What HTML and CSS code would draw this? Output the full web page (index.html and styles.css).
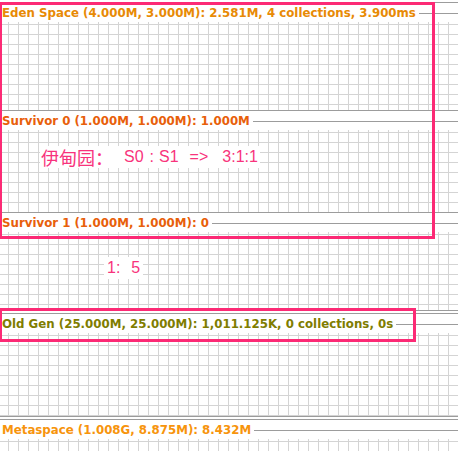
FILE: index.html
```html
<!DOCTYPE html>
<html>
<head>
<meta charset="utf-8">
<link rel="stylesheet" href="styles.css">
</head>
<body>
<div class="panel">
  <section class="space">
    <div class="label-row"><span class="label eden">Eden Space (4.000M, 3.000M): 2.581M, 4 collections, 3.900ms</span><span class="rule"></span></div>
    <div class="grid g-eden"></div>
  </section>
  <section class="space">
    <div class="label-row"><span class="label surv">Survivor 0 (1.000M, 1.000M): 1.000M</span><span class="rule"></span></div>
    <div class="grid g-s0"></div>
  </section>
  <section class="space closed">
    <div class="label-row"><span class="label surv">Survivor 1 (1.000M, 1.000M): 0</span><span class="rule"></span></div>
    <div class="grid g-s1"></div>
  </section>
  <section class="space closed gap">
    <div class="label-row"><span class="label old">Old Gen (25.000M, 25.000M): 1,011.125K, 0 collections, 0s</span><span class="rule"></span></div>
    <div class="grid g-old"></div>
  </section>
  <section class="space gap">
    <div class="label-row"><span class="label meta">Metaspace (1.008G, 8.875M): 8.432M</span><span class="rule"></span></div>
    <div class="grid g-meta"></div>
  </section>
</div>

<div class="box box-young"></div>
<div class="box box-old"></div>

<div class="note note-ratio"><span class="seg s-a">伊甸园：</span><span class="seg s-b">S0</span><span class="seg s-c">:</span><span class="seg s-d">S1</span><span class="seg s-e">=&gt;</span><span class="seg s-f">3:1:1</span></div>
<div class="note note-old"><span class="seg">1:</span><span class="seg s-five">5</span></div>
</body>
</html>
```

FILE: styles.css
```css
html, body {
  margin: 0;
  padding: 0;
  background: #fff;
}
body {
  width: 458px;
  height: 453px;
  overflow: hidden;
  position: relative;
  padding-top: 2px;
  box-sizing: border-box;
}
.panel {
  display: flex;
  flex-direction: column;
  width: 458px;
}
.space {
  border-top: 1px solid #9c9c9c;
}
.space.closed {
  border-bottom: 1px solid #9c9c9c;
}
.space.gap {
  margin-top: 2px;
}
.label-row {
  height: 19px;
  box-sizing: border-box;
  padding-top: 2px;
  display: flex;
  align-items: center;
  background: #fff;
}
.label {
  font-family: "DejaVu Sans", sans-serif;
  font-weight: bold;
  font-size: 11.8px;
  line-height: 17px;
  padding-left: 2px;
  white-space: nowrap;
}
.eden { color: #e88a05; }
.surv { color: #e8600a; }
.old { color: #7f7d00; }
.meta { color: #f7940c; }
.rule {
  flex: 1;
  height: 1px;
  background: #9c9c9c;
  margin-left: 3px;
}
.grid {
  background-color: #fff;
  background-image:
    linear-gradient(to right, #d4d4d4 1px, transparent 1px),
    linear-gradient(to bottom, #d4d4d4 1px, transparent 1px);
  background-size: 10px 10px;
  background-position: 8px 2px;
}
.g-eden { height: 88px; }
.g-s0 { height: 82px; }
.g-s1 { height: 78px; }
.g-old { height: 83px; }
.g-meta { height: 12px; }

.box {
  position: absolute;
  border: 3px solid #fc2a75;
  box-sizing: border-box;
}
.box-young {
  left: -1px;
  top: 2px;
  width: 436px;
  height: 237px;
}
.box-old {
  left: -1px;
  top: 308px;
  width: 417px;
  height: 34px;
}

.note {
  position: absolute;
  display: flex;
  align-items: center;
  background: #fff;
  color: #f8337c;
  font-family: "Liberation Sans", "Noto Sans CJK SC", sans-serif;
  font-size: 16px;
  line-height: 22px;
  white-space: pre;
}
.note-ratio {
  left: 40px;
  top: 146px;
  padding-right: 2px;
}
.s-a { font-family: "Noto Sans CJK SC", sans-serif; font-size: 18px; margin-left: 1px; }
.s-b { margin-left: 11px; }
.s-c { margin-left: 6px; }
.s-d { margin-left: 5px; }
.s-e { margin-left: 11px; }
.s-f { margin-left: 14px; }
.note-old {
  left: 104px;
  top: 257px;
  padding: 0 3px;
}
.s-five { margin-left: 11px; }
```
